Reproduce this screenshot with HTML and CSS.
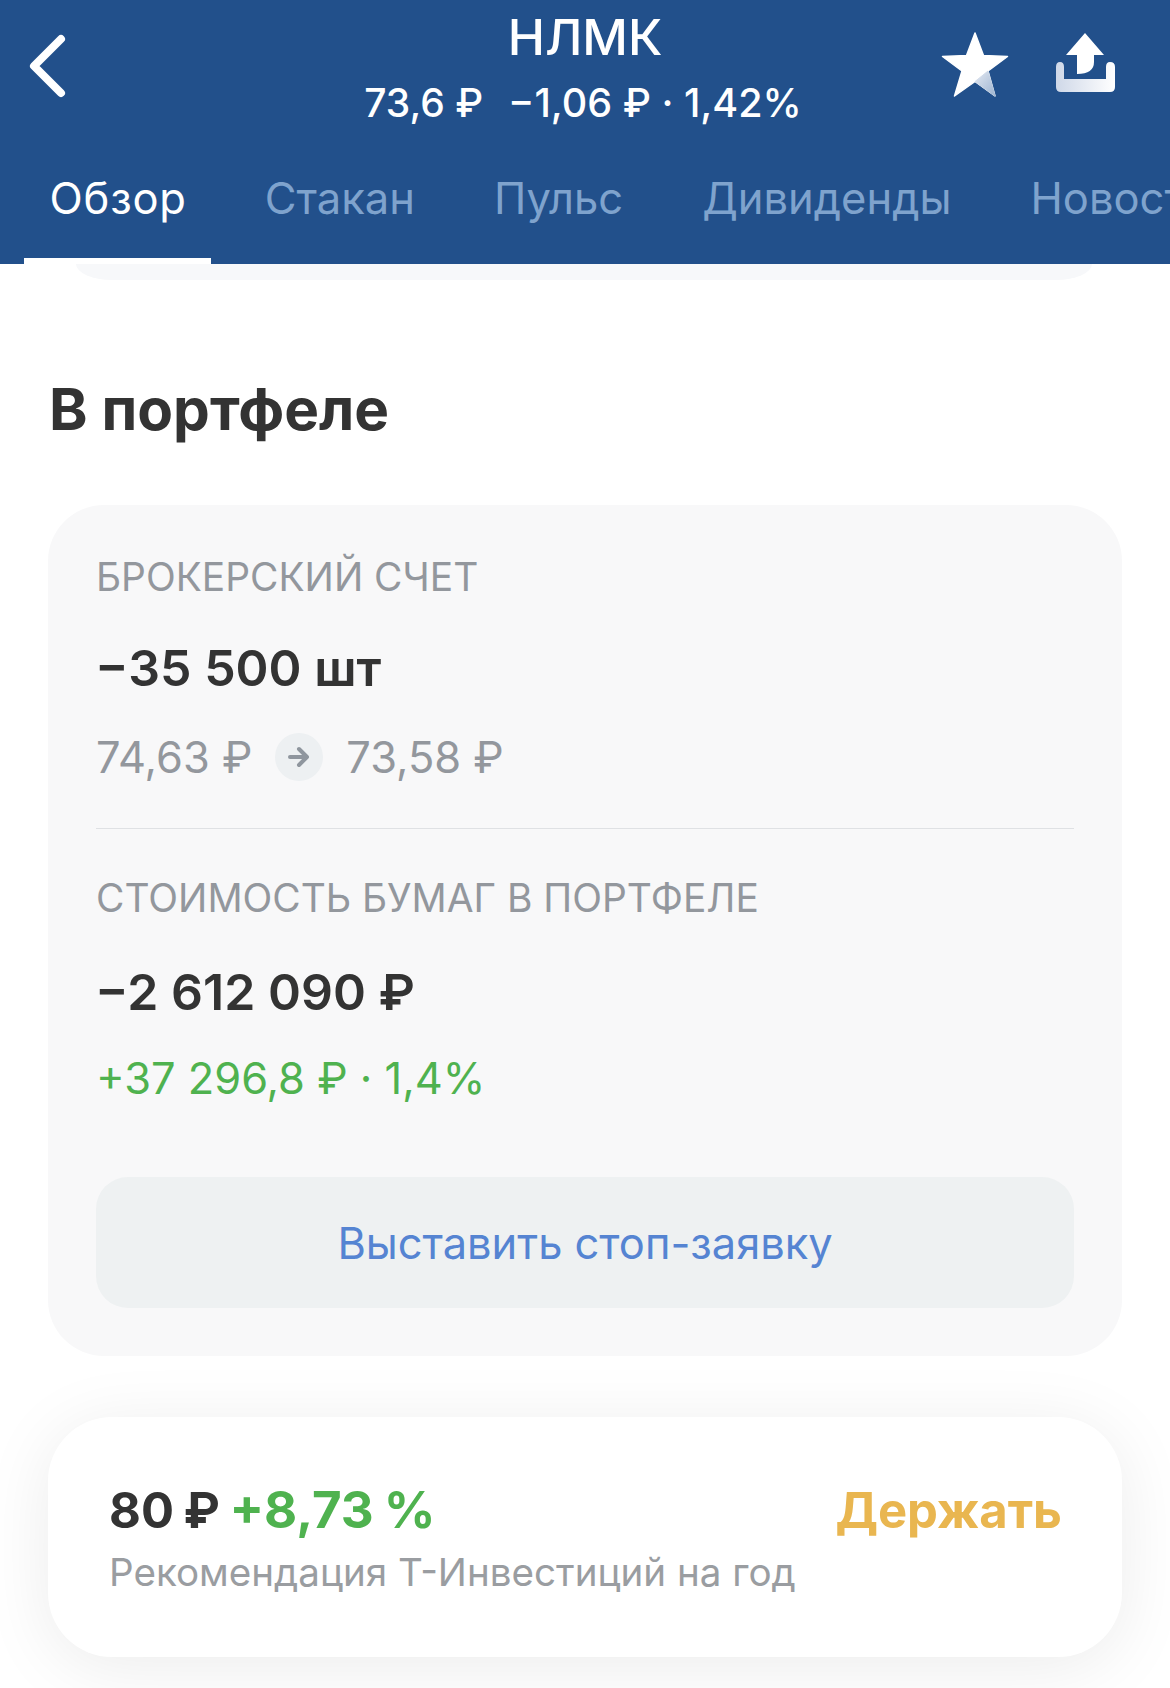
FILE: index.html
```html
<!DOCTYPE html>
<html lang="ru">
<head>
<meta charset="utf-8">
<title>НЛМК</title>
<link rel="stylesheet" href="styles.css">
</head>
<body>
<header class="header">
  <div class="topbar">
    <svg class="back" width="40" height="64" viewBox="0 0 40 64"><path d="M33 5 L6 32 L33 59" fill="none" stroke="#fff" stroke-width="8" stroke-linecap="round" stroke-linejoin="round"/></svg>
    <div class="titles">
      <div class="title">НЛМК</div>
      <div class="subtitle"><span class="price">73,6 ₽</span><span>−1,06 ₽ · 1,42%</span></div>
    </div>
    <div class="actions">
      <svg class="star" width="68" height="66" viewBox="0 0 68 66"><defs><linearGradient id="sg" x1="0" y1="0" x2="1" y2="1"><stop offset="0" stop-color="#e4e9f2"/><stop offset="1" stop-color="#9db4d1"/></linearGradient></defs><path d="M34 1 L42.5 23.5 L66.5 24.5 L47 39 L54 64 L34 49.5 L13.5 64 L21 39 L1.5 24.5 L25.5 23.5 Z" fill="#fff" stroke="#fff" stroke-width="1.5" stroke-linejoin="round"/><path d="M34 49.5 L47 39 L54 64 Z" fill="url(#sg)" stroke="url(#sg)" stroke-width="1" stroke-linejoin="round"/></svg>
      <svg class="share" width="60" height="62" viewBox="0 0 60 62"><defs><linearGradient id="tg" x1="0" y1="0" x2="1" y2="0"><stop offset="0" stop-color="#cfd8e8"/><stop offset="1" stop-color="#ffffff"/></linearGradient></defs><path d="M30 1 L49 23 L39 23 L39 30 Q39 42 22 42 L22 23 L11 23 Z" fill="#fff"/><path d="M1 35 Q1 30 5 30 Q9 30 9 35 L9 47 L51 47 L51 35 Q51 30 55 30 Q60 30 60 35 L60 55 Q60 60 55 60 L6 60 Q1 60 1 55 Z" fill="url(#tg)"/></svg>
    </div>
  </div>
  <nav class="tabs">
    <div class="tab active">Обзор</div>
    <div class="tab">Стакан</div>
    <div class="tab">Пульс</div>
    <div class="tab">Дивиденды</div>
    <div class="tab">Новости</div>
  </nav>
</header>
<div class="prev-card"></div>
<main class="content">
  <h1 class="section-title">В портфеле</h1>
  <section class="card">
    <div class="label">БРОКЕРСКИЙ СЧЕТ</div>
    <div class="value">−35 500 шт</div>
    <div class="prices">
      <span>74,63 ₽</span>
      <span class="arrow"><svg width="24" height="22" viewBox="0 0 24 22"><path d="M3 11 H20 M12 3 L20 11 L12 19" fill="none" stroke="#8f969e" stroke-width="4" stroke-linecap="round" stroke-linejoin="round"/></svg></span>
      <span>73,58 ₽</span>
    </div>
    <div class="divider"></div>
    <div class="label">СТОИМОСТЬ БУМАГ В ПОРТФЕЛЕ</div>
    <div class="value value-second">−2 612 090 ₽</div>
    <div class="gain">+37 296,8 ₽ · 1,4%</div>
    <div class="button">Выставить стоп-заявку</div>
  </section>
  <section class="reco">
    <div class="reco-left">
      <div class="reco-price">80 ₽ <span class="green">+8,73 %</span></div>
      <div class="reco-note">Рекомендация Т-Инвестиций на год</div>
    </div>
    <div class="reco-action">Держать</div>
  </section>
</main>
</body>
</html>
```
FILE: styles.css
```css
* { box-sizing: border-box; }
html, body { margin: 0; padding: 0; }
body {
  width: 1170px;
  height: 1688px;
  overflow: hidden;
  background: #fff;
  font-family: Inter, "Noto Sans", "Liberation Sans", sans-serif;
  color: #333;
}
.header {
  height: 264px;
  background: #22508b;
  color: #fff;
  display: flex;
  flex-direction: column;
}
.topbar {
  height: 152px;
  padding: 0 28px;
  display: grid;
  grid-template-columns: 1fr auto 1fr;
  align-items: start;
}
.back { margin-top: 34px; }
.titles {
  display: flex;
  flex-direction: column;
  align-items: center;
  padding-top: 6px;
}
.title { font-size: 50px; font-weight: 500; line-height: 62px; }
.subtitle { font-size: 39.5px; font-weight: 500; line-height: 52px; display: flex; gap: 25px; margin-top: 9px; margin-right: 4px; }
.price { font-size: 39px; }
.actions { display: flex; justify-content: flex-end; gap: 46px; margin-top: 32px; margin-right: 27px; }
.tabs {
  flex: 1;
  display: flex;
  overflow: hidden;
  padding-left: 24px;
  gap: 28px;
}
.tab {
  height: 112px;
  padding: 20px 25.5px 0;
  font-size: 43.5px;
  line-height: 52px;
  color: #7fa3cd;
  white-space: nowrap;
  border-bottom: 6px solid transparent;
  flex: none;
}
.tab.active { color: #fff; border-bottom-color: #fff; letter-spacing: 0.8px; padding-right: 24.5px; }
.prev-card {
  height: 16px;
  margin: 0 78px 0 76px;
  background: #f7f8fa;
  border-radius: 0 0 36px 36px / 0 0 16px 16px;
}
.content { padding: 0 48px; }
.section-title {
  margin: 96px 0 0 1px;
  font-size: 58.4px;
  line-height: 66px;
  font-weight: 700;
  color: #333;
}
.card {
  margin-top: 63px;
  background: #f8f8f9;
  border-radius: 56px;
  padding: 48px;
  display: flex;
  flex-direction: column;
}
.card > * { flex: none; }
.label { font-size: 38.9px; line-height: 48px; color: #93979d; font-weight: 400; }
.value { font-size: 50px; line-height: 60px; font-weight: 600; color: #333; margin: 37px 0 0 -1px; }
.value-second { margin-top: 40px; }
.prices {
  display: flex;
  align-items: center;
  gap: 23px;
  margin-top: 31px;
  font-size: 43.4px;
  line-height: 56px;
  color: #93979d;
}
.arrow {
  width: 48px;
  height: 48px;
  border-radius: 50%;
  background: #edf0f2;
  display: flex;
  align-items: center;
  justify-content: center;
}
.divider { height: 1px; background: #dfe1e4; margin: 43px 0 45px; }
.gain { font-size: 43.4px; line-height: 56px; color: #4fb24f; margin-top: 28px; }
.button {
  margin-top: 71px;
  height: 131px;
  background: #eef1f2;
  border-radius: 32px;
  display: flex;
  align-items: center;
  justify-content: center;
  font-size: 43.4px;
  color: #5584d2;
}
.reco {
  margin-top: 61px;
  height: 240px;
  background: #fff;
  border-radius: 64px;
  box-shadow: 0 10px 70px rgba(0, 0, 0, 0.08);
  padding: 62px 60px 0 61px;
  display: flex;
  justify-content: space-between;
  align-items: flex-start;
}
.reco-price { font-size: 49px; line-height: 62px; font-weight: 700; color: #333; word-spacing: -2px; }
.green { color: #4fb24f; font-size: 51px; }
.reco-note { font-size: 38.6px; line-height: 50px; color: #9a9da1; margin-top: 5px; }
.reco-action { font-size: 49px; line-height: 62px; font-weight: 700; color: #e9b650; margin-top: 1px; }
```
